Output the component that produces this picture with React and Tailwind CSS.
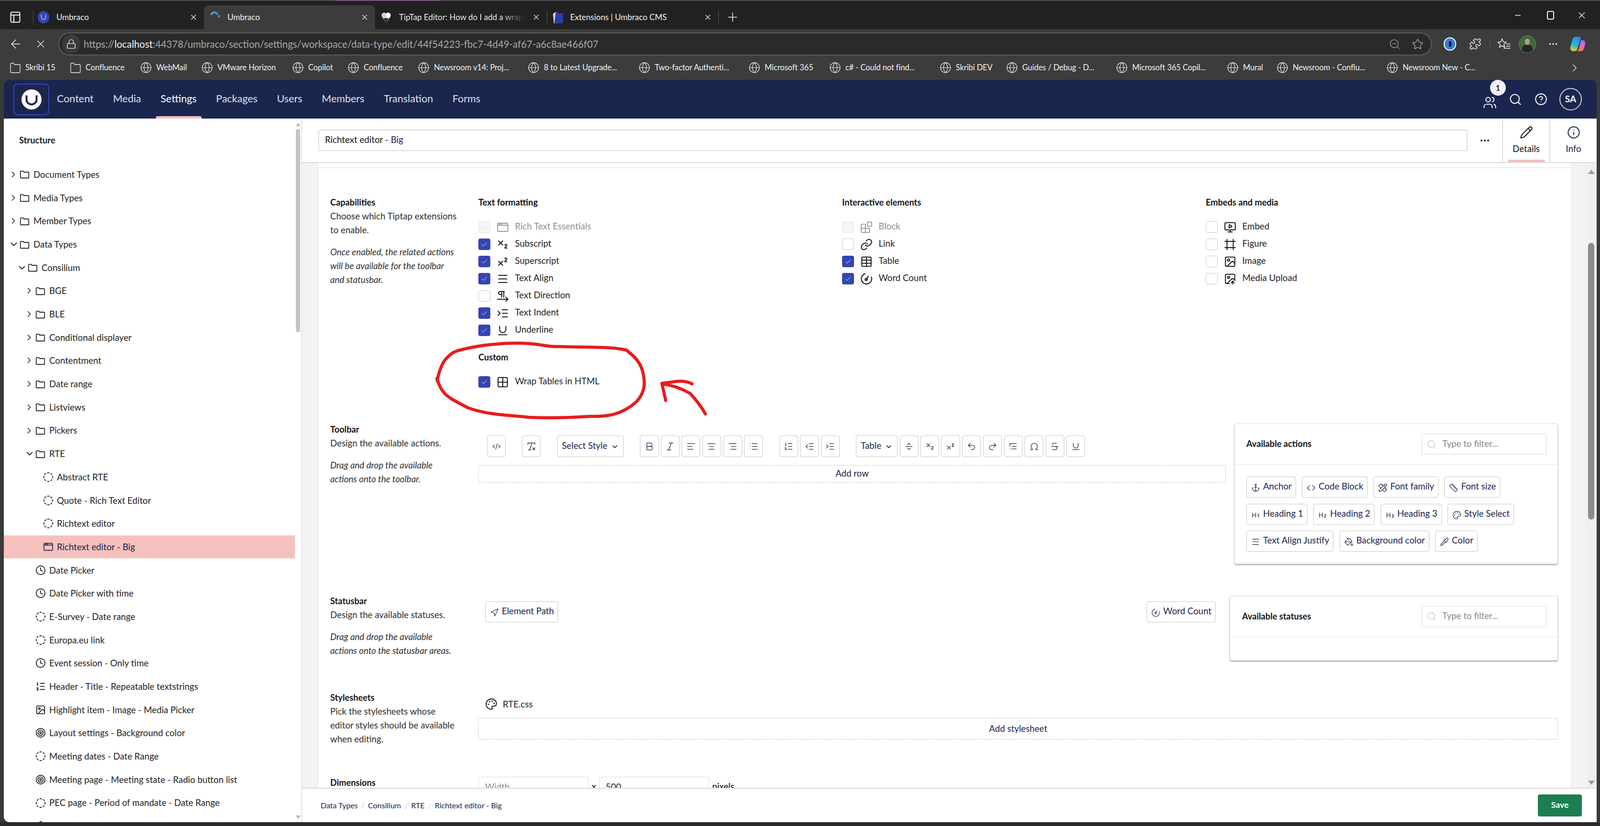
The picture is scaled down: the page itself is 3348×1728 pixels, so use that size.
import React from "react";
import {
  Anchor, AlignCenter, AlignLeft, AlignRight, AppWindow, ArrowLeft, Blocks, Bold, Check, ChevronDown, ChevronRight,
  CircleDashed, CircleHelp, Clock, Code, CodeXml, Ellipsis, Frame, Globe, Grid2x2, Heading1, Heading2, Heading3,
  Image, ImageUp, IndentDecrease, IndentIncrease, Italic, Link, List, ListOrdered, Lock, Minus, MonitorPlay, Navigation, Omega, PaintBucket,
  Palette, Pencil, PencilRuler, PilcrowRight, Pipette, Plus, Puzzle, Redo2, RemoveFormatting, Ruler, Search, Star, Strikethrough,
  Subscript, Superscript, Table, Target, Underline, Undo2, Users, X, ZoomOut, Info, Menu,
} from "lucide-react";

function FolderIcon({ color = "#111" }) {
  return (
    <svg width="21" height="21" viewBox="0 0 24 24" fill="none" stroke={color} strokeWidth="1.8" strokeLinejoin="round">
      <path d="M2 5.5V20a1 1 0 0 0 1 1h18a1 1 0 0 0 1-1V8a1 1 0 0 0-1-1H10L8.5 4.5H3a1 1 0 0 0-1 1z" />
    </svg>
  );
}

function GaugeIcon({ size = 26, strokeWidth = 2, className }) {
  return (
    <svg className={className} width={size} height={size} viewBox="0 0 24 24" fill="none" stroke="currentColor" strokeWidth={strokeWidth} strokeLinecap="round">
      <path d="M9.5 2.6A10 10 0 1 0 21.6 9" />
      <path d="M12 13l3.5-6" />
      <circle cx="11.5" cy="13.5" r="2" />
    </svg>
  );
}

function HrIcon({ size = 20, strokeWidth = 1.5 }) {
  return (
    <svg width={size} height={size} viewBox="0 0 24 24" fill="none" stroke="currentColor" strokeWidth={strokeWidth} strokeLinecap="round" strokeLinejoin="round">
      <path d="M4 12h16M8.5 7.5L12 4l3.5 3.5M8.5 16.5L12 20l3.5-3.5" />
    </svg>
  );
}

function DirIcon({ size = 20, strokeWidth = 1.5 }) {
  return (
    <svg width={size} height={size} viewBox="0 0 24 24" fill="none" stroke="currentColor" strokeWidth={strokeWidth} strokeLinecap="round">
      <path d="M4 5h16M4 5v6M9 12h11M9 18h11M4 18h1" />
    </svg>
  );
}

function FavIcon() {
  return (
    <svg width="29" height="28" viewBox="0 0 29 28" fill="none" stroke="#f0f0f0" strokeWidth="1.5" strokeLinejoin="round" strokeLinecap="round">
      <path d="M10 3l2.6 6.4 6.4.6-5 4.4 1.6 6.8L10 17.5l-5.6 3.7L6 14.4 1 10l6.4-.6z" />
      <path d="M19 14h8M19 18.5h8M14 23h13" />
    </svg>
  );
}

function FilledFolder() {
  return (
    <svg width="24" height="26" viewBox="0 0 24 24" fill="none" stroke="#f2f2f2" strokeWidth="1.3" strokeLinejoin="round">
      <path d="M2 4v16.5a1.5 1.5 0 0 0 1.5 1.5h17a1.5 1.5 0 0 0 1.5-1.5V6.5A1.5 1.5 0 0 0 20.5 5H10L8 2H4a2 2 0 0 0-2 2z" />
    </svg>
  );
}

const bookmarks = [
  ["Skribi 15", 20, 146, "f"], ["Confluence", 146, 293, "f"], ["WebMail", 293, 421], ["VMware Horizon", 421, 611], ["Copilot", 611, 727],
  ["Confluence", 727, 874], ["Newsroom v14: Proj...", 874, 1104], ["8 to Latest Upgrade...", 1104, 1336], ["Two-factor Authenti...", 1336, 1566],
  ["Microsoft 365", 1566, 1735], ["c# - Could not find...", 1735, 1966], ["Skribi DEV", 1966, 2105], ["Guides / Debug - D...", 2105, 2335],
  ["Microsoft 365 Copil...", 2335, 2567], ["Mural", 2567, 2671], ["Newsroom - Conflu...", 2671, 2901], ["Newsroom New - C...", 2901, 3120],
];

function Tab({ active, icon, label, w = 358, pl = 13, gap = 16, textW = 260, fade }) {
  return (
    <div
      className={`flex h-[50px] shrink-0 items-center ${active ? "rounded-t-[10px] bg-[#3c3c3c]" : ""}`}
      style={{ width: w, paddingLeft: pl }}
    >
      {icon}
      <span
        className={`overflow-hidden whitespace-nowrap text-[17px] text-[#f2f2f2] ${fade ? "[mask-image:linear-gradient(90deg,#000_82%,transparent)]" : ""}`}
        style={{ marginLeft: gap, width: textW }}
      >
        {label}
      </span>
      <X className="ml-auto mr-[13px] shrink-0 text-[#eeeeee]" size={18} strokeWidth={1.6} />
    </div>
  );
}

function ChromeBar() {
  return (
    <div className="shrink-0 [font-family:'Noto_Sans',sans-serif]">
      <div className="flex h-[2px] bg-[#4a4a4a]">
        <div className="ml-[701px] w-[221px] bg-[#7d5480]" />
      </div>
      <div className="flex h-[59px] items-end bg-[#212121]">
        <div className="flex h-[50px] w-[69px] shrink-0 items-center pl-[21px]">
          <svg width="22" height="24" viewBox="0 0 22 24" fill="none" stroke="#f2f2f2" strokeWidth="2">
            <rect x="1.5" y="1.5" width="19" height="21" rx="3" />
            <path d="M1.5 7.5h19M8 7.5v15" />
          </svg>
        </div>
        <div className="mb-[9px] h-[30px] w-px shrink-0 bg-[#555]" />
        <Tab
          w={357}
          pl={9}
          gap={15}
          textW={200}
          label="Umbraco"
          icon={
            <svg width="24" height="30" viewBox="0 0 24 30">
              <ellipse cx="12" cy="15" rx="12" ry="13" fill="#3544b1" />
              <path d="M7.5 9v6a4.5 4.5 0 0 0 9 0V9" fill="none" stroke="#9aa5e8" strokeWidth="2" />
            </svg>
          }
        />
        <Tab
          active
          w={358}
          label="Umbraco"
          textW={200}
          icon={
            <svg width="20" height="24" viewBox="0 0 20 24" fill="none" stroke="#4fa3e0" strokeWidth="3.5" strokeLinecap="round">
              <path d="M2 6a7 7 0 0 1 12-1M18 9l.3 2" />
            </svg>
          }
        />
        <Tab
          w={359}
          gap={17}
          fade
          textW={262}
          label="TipTap Editor: How do I add a wrapper around tables?"
          icon={
            <svg width="20" height="26" viewBox="0 0 20 26">
              <path d="M10 25L2 13a5 5 0 0 1 8-8z" fill="#f7c3bc" />
              <path d="M10 25l8-12a5 5 0 0 0-8-8z" fill="#fff" />
              <path d="M10 25L4.5 15h11z" fill="#1b264f" />
            </svg>
          }
        />
        <div className="mb-[9px] h-[30px] w-px shrink-0 bg-[#555]" />
        <Tab
          w={358}
          pl={10}
          gap={13}
          textW={220}
          label="Extensions | Umbraco CMS"
          icon={
            <svg width="25" height="30" viewBox="0 0 25 30">
              <path d="M2 8l7-5 3 5v20H4z" fill="#f4c9c0" />
              <path d="M8 2l7 5 8-1v22H5z" fill="#283fa8" />
            </svg>
          }
        />
        <div className="mb-[9px] h-[30px] w-px shrink-0 bg-[#555]" />
        <div className="flex h-[50px] items-center pl-[14px]">
          <Plus className="text-[#f0f0f0]" size={30} strokeWidth={1.2} />
        </div>
        <div className="ml-auto flex h-[59px] items-start pt-[15px]">
          <div className="flex h-[30px] w-[68px] items-center justify-center">
            <Minus className="text-[#f2f2f2]" size={18} strokeWidth={2} />
          </div>
          <div className="flex h-[30px] w-[68px] items-center justify-center">
            <div className="h-[18px] w-[15px] rounded-[3px] border-2 border-[#f2f2f2]" />
          </div>
          <div className="flex h-[30px] w-[68px] items-center justify-center pr-[4px]">
            <X className="text-[#f2f2f2]" size={22} strokeWidth={1.5} />
          </div>
          <div className="w-[2px]" />
        </div>
      </div>
      <div className="flex h-[56px] items-start bg-[#3c3c3c] pt-[7px]">
        <div className="flex h-[48px] w-[122px] shrink-0 items-center pl-[18px]">
          <ArrowLeft className="text-[#f0f0f0]" size={30} strokeWidth={1.2} />
          <X className="ml-[24px] text-[#f0f0f0]" size={26} strokeWidth={1.2} />
        </div>
        <div className="flex h-[48px] w-[2874px] shrink-0 items-center rounded-full border-2 border-[#5c5c5c] bg-[#2a2a2a] pl-[6px]">
          <div className="flex h-[40px] w-[38px] shrink-0 items-center justify-center rounded-full bg-[#3a3a3a]">
            <Lock className="text-[#f0f0f0]" size={22} strokeWidth={1.5} />
          </div>
          <div className="ml-[7px] text-[20.4px] text-[#a8a8a8]">
            https://<span className="text-[#f4f4f4]">localhost</span>:44378/umbraco/section/settings/workspace/data-type/edit/44f54223-fbc7-4d49-af67-a6c8ae466f07
          </div>
          <ZoomOut className="ml-auto text-[#a0a0a0]" size={25} strokeWidth={1.3} />
          <Star className="ml-[23px] mr-[15px] text-[#b0b0b0]" size={25} strokeWidth={1.3} />
        </div>
        <div className="flex h-[48px] flex-1 items-center">
          <div className="ml-[25px] flex h-[28px] w-[26px] items-center justify-center rounded-full border-2 border-white bg-[#2f7fd6]">
            <div className="h-[12px] w-[5px] rounded-full bg-[#111]" />
          </div>
          <Puzzle className="ml-[27px] text-[#f0f0f0]" size={26} strokeWidth={1.4} />
          <div className="ml-[17px] h-[30px] w-px bg-[#5a5a5a]" />
          <div className="ml-[15px]">
            <FavIcon />
          </div>
          <div className="ml-[16px] flex h-[37px] w-[36px] flex-col items-center overflow-hidden rounded-full border border-[#777] bg-[#3f6b3a] pt-[6px]">
            <div className="h-[13px] w-[10px] shrink-0 rounded-full bg-[#b89a86]" />
            <div className="h-[18px] w-[22px] shrink-0 rounded-t-[8px] bg-[#23262f]" />
          </div>
          <Ellipsis className="ml-[25px] text-[#f0f0f0]" size={22} strokeWidth={2} />
          <svg className="ml-[23px]" width="34" height="32" viewBox="0 0 34 32">
            <defs>
              <linearGradient id="cpa" x1="0.5" y1="0" x2="0.3" y2="1">
                <stop offset="0" stopColor="#1e8ff0" />
                <stop offset="0.6" stopColor="#2fb9c9" />
                <stop offset="1" stopColor="#e3d12e" />
              </linearGradient>
              <linearGradient id="cpb" x1="0.5" y1="0" x2="0.5" y2="1">
                <stop offset="0" stopColor="#9a6cf2" />
                <stop offset="0.55" stopColor="#e765c4" />
                <stop offset="1" stopColor="#ff8138" />
              </linearGradient>
            </defs>
            <path d="M24 8h3c5 0 7 4 6 9l-3 9c-1 3-3 5-7 5h-10c4 0 6-2 7-5z" fill="url(#cpb)" />
            <path d="M13 1h8c3 0 3 3 2 5l-6 20c-1 3-3 5-7 5H8c-5 0-7-5-6-9l4-14c1-4 3-7 7-7z" fill="url(#cpa)" />
          </svg>
        </div>
      </div>
      <div className="relative flex h-[50px] items-center bg-[#3c3c3c] pl-[20px] pb-[1px]">
        {bookmarks.map(([t, a, b, kind]) => (
          <div key={t + a} className="flex shrink-0 items-center gap-[9px]" style={{ width: b - a }}>
            {kind === "f" ? <FilledFolder /> : <Globe className="shrink-0 text-[#f2f2f2]" size={25} strokeWidth={1.1} />}
            <span className="whitespace-nowrap text-[16.5px] tracking-[-0.1px] text-[#f2f2f2]">{t}</span>
          </div>
        ))}
        <ChevronRight className="absolute right-[40px] top-[12px] text-[#f0f0f0]" size={26} strokeWidth={1.2} />
      </div>
    </div>
  );
}

const navItems = ["Content", "Media", "Settings", "Packages", "Users", "Members", "Translation", "Forms"];

function AppHeader() {
  return (
    <div className="flex h-[81px] shrink-0 items-center rounded-t-[12px] bg-[#1b264f] pl-[20px] pr-[31px]">
      <div className="flex h-[66px] w-[75px] shrink-0 items-center justify-center rounded-[8px] border-2 border-[#3544b1]">
        <svg width="42" height="42" viewBox="0 0 42 42">
          <circle cx="21" cy="21" r="21" fill="#fff" />
          <path d="M10.5 12.5v9a10.5 10 0 0 0 21 0v-9" fill="none" stroke="#1b264f" strokeWidth="4" />
        </svg>
      </div>
      <nav className="ml-[16px] flex h-full items-stretch gap-[40.7px]">
        {navItems.map((n) => (
          <div key={n} className={`relative flex items-center pb-[2px] text-[21.5px] ${n === "Settings" ? "text-white" : "text-[#dfe1e8]"}`}>
            {n}
            {n === "Settings" && <div className="absolute bottom-0 left-[-10px] right-[-11px] h-[5px] rounded-t-[4px] bg-[#f5c1bc]" />}
          </div>
        ))}
      </nav>
      <div className="relative ml-auto flex items-center">
        <Users className="mt-[13px] text-white" size={29} strokeWidth={1.6} />
        <div className="absolute left-[15px] top-[-17px] flex h-[33px] w-[33px] items-center justify-center rounded-full bg-[#f3f3f5] text-[17px] font-bold text-[#1b264f]">1</div>
        <Search className="ml-[25px] text-white" size={28} strokeWidth={1.7} />
        <CircleHelp className="ml-[26px] text-white" size={27} strokeWidth={1.7} />
        <div className="ml-[25px] flex h-[47px] w-[47px] items-center justify-center rounded-full border-2 border-[#d0d0d0] text-[19px] font-bold text-white">SA</div>
      </div>
    </div>
  );
}

const Dash = <CircleDashed size={22} strokeWidth={1.8} className="text-[#111]" />;
const Clk = <Clock size={22} strokeWidth={1.8} className="text-[#111]" />;
const Tgt = <Target size={22} strokeWidth={1.8} className="text-[#111]" />;

const tree = [
  ["Document Types", 0, "r"], ["Media Types", 0, "r"], ["Member Types", 0, "r"], ["Data Types", 0, "d"], ["Consilium", 1, "d"],
  ["BGE", 2, "r"], ["BLE", 2, "r"], ["Conditional displayer", 2, "r"], ["Contentment", 2, "r"], ["Date range", 2, "r"], ["Listviews", 2, "r"],
  ["Pickers", 2, "r"], ["RTE", 2, "d"],
  ["Abstract RTE", 3, null, Dash], ["Quote - Rich Text Editor", 3, null, Dash], ["Richtext editor", 3, null, Dash],
  ["Richtext editor - Big", 3, null, <AppWindow size={22} strokeWidth={1.8} className="text-[#1b264f]" />, true],
  ["Date Picker", 2, null, Clk], ["Date Picker with time", 2, null, Clk], ["E-Survey - Date range", 2, null, Dash], ["Europa.eu link", 2, null, Dash],
  ["Event session - Only time", 2, null, Clk],
  ["Header - Title - Repeatable textstrings", 2, null, <ListOrdered size={22} strokeWidth={1.8} className="text-[#111]" />],
  ["Highlight item - Image - Media Picker", 2, null, <Image size={22} strokeWidth={1.8} className="text-[#111]" />],
  ["Layout settings - Background color", 2, null, Tgt], ["Meeting dates - Date Range", 2, null, Dash],
  ["Meeting page - Meeting state - Radio button list", 2, null, Tgt], ["PEC page - Period of mandate - Date Range", 2, null, Dash],
  ["PEC page - Period of mandate - Date Range", 2, null, Dash],
];

const treeOffset = { 0: 33, 1: 50, 2: 66, 3: 82 };

function Sidebar() {
  return (
    <aside className="flex w-[624px] shrink-0 overflow-hidden rounded-bl-[12px] border-r-2 border-[#e4e4e6] bg-white">
      <div className="w-[609px] shrink-0 overflow-hidden">
        <div className="h-[92.6px] pl-[32px] pt-[29px] text-[18.2px] font-bold leading-[32px] text-[#1b1b1b]">Structure</div>
        {tree.map(([label, lvl, chev, icon, sel], i) => (
          <div
            key={label + i}
            className={`flex h-[48.7px] items-center ${sel ? "bg-[#f5c1bc] text-[#1b264f]" : "text-[#1f1f1f]"}`}
            style={{ paddingLeft: treeOffset[lvl] }}
          >
            <div className="flex w-[28px] shrink-0 items-center">
              {chev === "r" && <ChevronRight className="ml-[-23px] text-[#1b264f]" size={20} strokeWidth={2} />}
              {chev === "d" && <ChevronDown className="ml-[-23px] text-[#1b264f]" size={22} strokeWidth={2} />}
            </div>
            <div className="ml-[-28px] flex w-[29px] shrink-0 items-center">{icon || <FolderIcon />}</div>
            <span className="whitespace-nowrap">{label}</span>
          </div>
        ))}
      </div>
      <div className="flex w-[13px] shrink-0 flex-col items-center pt-[9px] pb-[7px]">
        <div className="h-0 w-0 border-x-[5px] border-b-[7px] border-x-transparent border-b-[#b8b8b8]" />
        <div className="mt-[6px] h-[425px] w-[9px] rounded-full bg-[#c4c4c4]" />
        <div className="mt-auto h-0 w-0 border-x-[5px] border-t-[7px] border-x-transparent border-t-[#b8b8b8]" />
      </div>
    </aside>
  );
}

function Box({ checked, disabled }) {
  let cls = "border border-[#c8c8c8] bg-white";
  if (checked) cls = "bg-[#3544b1]";
  if (disabled) cls = "border border-[#e2e2e2] bg-[#f6f6f6]";
  return (
    <div className={`flex h-[24.5px] w-[24.5px] shrink-0 items-center justify-center rounded-[4px] ${cls}`}>
      {(checked || disabled === "checked") && (
        <Check size={15} strokeWidth={1.5} className={disabled ? "text-[#d8d8d8]" : "text-white"} />
      )}
    </div>
  );
}

function CheckRow({ icon: I, custom, label, checked, disabled }) {
  return (
    <div className={`flex h-[36px] items-center ${disabled ? "text-[#8f8f8f]" : "text-[#1f1f1f]"}`}>
      <Box checked={checked} disabled={disabled} />
      <div className="ml-[13px] flex w-[26px] shrink-0 items-center justify-center">
        {custom || <I size={27} strokeWidth={disabled ? 1.6 : 1.9} />}
      </div>
      <span className="ml-[13px] mb-[4px] whitespace-nowrap">{label}</span>
    </div>
  );
}

function TB({ icon: I, size = 20, sw = 1.5 }) {
  return (
    <div className="flex h-[45px] w-[39px] shrink-0 items-center justify-center rounded-[4px] border-[1.5px] border-[#c8c8c8] text-[#1b264f]">
      <I size={size} strokeWidth={sw} />
    </div>
  );
}

function TBSelect({ label, w }) {
  return (
    <div className="flex h-[45px] shrink-0 items-center justify-between rounded-[4px] border-[1.5px] border-[#c8c8c8] px-[9px] pb-[3px] text-[#1b264f]" style={{ width: w }}>
      <span className="whitespace-nowrap">{label}</span>
      <ChevronDown className="mt-[4px]" size={17} strokeWidth={2} />
    </div>
  );
}

function Chip({ icon: I, label }) {
  return (
    <div className="flex h-[44px] shrink-0 items-center gap-[6px] rounded-[4px] border-[1.5px] border-[#c8c8c8] pl-[9px] pr-[8px] text-[#1b264f]">
      <I className="mt-[3px] shrink-0" size={19} strokeWidth={1.5} />
      <span className="mb-[3px] whitespace-nowrap">{label}</span>
    </div>
  );
}

function Filter() {
  return (
    <div className="flex h-[44px] w-[261px] shrink-0 items-center rounded-[4px] border-[1.5px] border-[#dcdcdc] pl-[9px] text-[#8a8a8a]">
      <Search className="text-[#c4c4c4]" size={21} strokeWidth={1.4} />
      <span className="ml-[12px] mb-[2px]">Type to filter...</span>
    </div>
  );
}

function Label({ title, lines, note }) {
  return (
    <div className="w-[310px] shrink-0 whitespace-nowrap leading-[29px] text-[#303030]">
      <div className="text-[18.2px] font-bold text-[#151515]">{title}</div>
      <div>
        {lines.map((l) => (
          <div key={l}>{l}</div>
        ))}
      </div>
      {note && (
        <div className="mt-[17px] italic">
          {note.map((l) => (
            <div key={l}>{l}</div>
          ))}
        </div>
      )}
    </div>
  );
}

function ColHead({ children }) {
  return <div className="mb-[19px] h-[29px] text-[18.2px] font-bold leading-[29px] text-[#151515]">{children}</div>;
}

function Content() {
  return (
    <div className="flex-1 overflow-hidden border-l border-[#e4e4e6] bg-white pl-[25px] pr-[26px]">
      <div className="-ml-[25px] -mr-[26px] h-[11px] border-b-2 border-[#ececee]" />
      <div className="mt-[57px] flex h-[475px]">
        <Label
          title="Capabilities"
          lines={["Choose which Tiptap extensions", "to enable."]}
          note={["Once enabled, the related actions", "will be available for the toolbar", "and statusbar."]}
        />
        <div className="grid flex-1 grid-cols-[761px_761px_1fr]">
          <div>
            <ColHead>Text formatting</ColHead>
            <CheckRow icon={AppWindow} label="Rich Text Essentials" disabled="checked" />
            <CheckRow icon={Subscript} label="Subscript" checked />
            <CheckRow icon={Superscript} label="Superscript" checked />
            <CheckRow icon={Menu} label="Text Align" checked />
            <CheckRow icon={PilcrowRight} label="Text Direction" />
            <CheckRow icon={IndentIncrease} label="Text Indent" checked />
            <CheckRow icon={Underline} label="Underline" checked />
            <div className="mt-[24px]">
              <ColHead>Custom</ColHead>
              <CheckRow icon={Grid2x2} label="Wrap Tables in HTML" checked />
            </div>
          </div>
          <div>
            <ColHead>Interactive elements</ColHead>
            <CheckRow icon={Blocks} label="Block" disabled="empty" />
            <CheckRow icon={Link} label="Link" />
            <CheckRow icon={Table} label="Table" checked />
            <CheckRow custom={<GaugeIcon />} label="Word Count" checked />
          </div>
          <div>
            <ColHead>Embeds and media</ColHead>
            <CheckRow icon={MonitorPlay} label="Embed" />
            <CheckRow icon={Frame} label="Figure" />
            <CheckRow icon={Image} label="Image" />
            <CheckRow icon={ImageUp} label="Media Upload" />
          </div>
        </div>
      </div>

      <div className="flex h-[359px]">
        <Label
          title="Toolbar"
          lines={["Design the available actions."]}
          note={["Drag and drop the available", "actions onto the toolbar."]}
        />
        <div className="flex flex-1 items-start">
          <div className="w-[1564px] shrink-0 pt-[27px]">
            <div className="flex gap-[34.4px] pl-[18px]">
              <TB icon={CodeXml} size={18} />
              <TB icon={RemoveFormatting} size={22} />
              <TBSelect label="Select Style" w={139} />
              <div className="flex gap-[4.6px]">
                <TB icon={Bold} size={22} sw={1.4} />
                <TB icon={Italic} size={22} sw={1.4} />
                <TB icon={AlignLeft} />
                <TB icon={AlignCenter} />
                <TB icon={AlignRight} />
                <TB icon={List} />
              </div>
              <div className="flex gap-[4.6px]">
                <TB icon={ListOrdered} />
                <TB icon={IndentDecrease} />
                <TB icon={IndentIncrease} />
              </div>
              <div className="flex gap-[4.6px]">
                <TBSelect label="Table" w={87} />
                <TB icon={HrIcon} />
                <TB icon={Subscript} />
                <TB icon={Superscript} />
                <TB icon={Undo2} />
                <TB icon={Redo2} />
                <TB icon={DirIcon} />
                <TB icon={Omega} />
                <TB icon={Strikethrough} />
                <TB icon={Underline} />
              </div>
            </div>
            <div className="mt-[17px] flex h-[37px] items-center justify-center rounded-[3px] border border-dashed border-[#c0c0c0] text-[#1b264f]">
              <span className="mb-[2px]">Add row</span>
            </div>
          </div>
          <div className="ml-[18px] mt-[2px] h-[294px] flex-1 rounded-[4px] border border-[#dcdcdc] bg-white shadow-[0_2px_3px_rgba(0,0,0,0.35)]">
            <div className="flex h-[85px] items-center justify-between border-b border-[#e4e4e6] pl-[24px] pr-[23px]">
              <span className="text-[18.2px] font-bold text-[#151515]">Available actions</span>
              <Filter />
            </div>
            <div className="flex flex-col gap-[12.5px] px-[24px] pt-[25px]">
              <div className="flex gap-[12.5px]">
                <Chip icon={Anchor} label="Anchor" />
                <Chip icon={Code} label="Code Block" />
                <Chip icon={PencilRuler} label="Font family" />
                <Chip icon={Ruler} label="Font size" />
              </div>
              <div className="flex gap-[12.5px]">
                <Chip icon={Heading1} label="Heading 1" />
                <Chip icon={Heading2} label="Heading 2" />
                <Chip icon={Heading3} label="Heading 3" />
                <Chip icon={Palette} label="Style Select" />
              </div>
              <div className="flex gap-[12.5px]">
                <Chip icon={Menu} label="Text Align Justify" />
                <Chip icon={PaintBucket} label="Background color" />
                <Chip icon={Pipette} label="Color" />
              </div>
            </div>
          </div>
        </div>
      </div>

      <div className="flex h-[202px]">
        <Label
          title="Statusbar"
          lines={["Design the available statuses."]}
          note={["Drag and drop the available", "actions onto the statusbar areas."]}
        />
        <div className="flex flex-1 items-start">
          <div className="flex w-[1543px] shrink-0 justify-between pl-[14px] pt-[15px]">
            <Chip icon={Navigation} label="Element Path" />
            <Chip icon={GaugeIcon} label="Word Count" />
          </div>
          <div className="ml-[29px] mt-[3px] h-[136px] flex-1 rounded-[4px] border border-[#dcdcdc] bg-white shadow-[0_2px_3px_rgba(0,0,0,0.35)]">
            <div className="flex h-[86px] items-center justify-between border-b border-[#e4e4e6] pl-[25px] pr-[23px]">
              <span className="text-[18.2px] font-bold text-[#151515]">Available statuses</span>
              <Filter />
            </div>
          </div>
        </div>
      </div>

      <div className="flex h-[178px]">
        <Label
          title="Stylesheets"
          lines={["Pick the stylesheets whose", "editor styles should be available", "when editing."]}
        />
        <div className="flex-1 pt-[6px]">
          <div className="flex h-[44px] items-center pl-[14px] text-[#1f1f1f]">
            <Palette size={26} strokeWidth={1.8} />
            <span className="ml-[11px]">RTE.css</span>
          </div>
          <div className="mt-[7px] flex h-[45px] items-center justify-center rounded-[3px] border border-dashed border-[#c0c0c0] text-[#1b264f]">
            <span>Add stylesheet</span>
          </div>
        </div>
      </div>

      <div className="flex h-[60px]">
        <Label title="Dimensions" lines={[]} />
        <div className="flex flex-1 items-start pt-[2px]">
          <div className="h-[44px] w-[231px] rounded-[4px] border-[1.5px] border-[#dcdcdc] pl-[13px] pt-[6px] text-[#8a8a8a]">Width</div>
          <span className="mx-[6px] mt-[6px]">x</span>
          <div className="h-[44px] w-[231px] rounded-[4px] border-[1.5px] border-[#dcdcdc] pl-[13px] pt-[6px] text-[#1f1f1f]">500</div>
          <span className="ml-[6px] mt-[6px]">pixels</span>
        </div>
      </div>
    </div>
  );
}

function Workspace() {
  return (
    <main className="flex min-w-0 flex-1 flex-col">
      <div className="flex h-[93px] shrink-0 items-stretch border-b-2 border-[#dcdcde] bg-white">
        <div className="flex flex-1 items-center pl-[34px]">
          <div className="flex h-[45px] w-[2405px] items-center gap-[5px] rounded-[4px] border-2 border-[#dedede] pl-[12px] pb-[2px] text-[#151515]">
            <span>Richtext editor -</span>
            <span className="text-[#1b264f]">Big</span>
          </div>
        </div>
        <div className="flex w-[72px] items-center justify-center">
          <Ellipsis className="text-[#1b264f]" size={24} strokeWidth={2.2} />
        </div>
        <div className="relative flex w-[99px] flex-col items-center border-l-2 border-[#dcdcde] pt-[15px] text-[#111]">
          <Pencil size={28} strokeWidth={1.7} />
          <span className="mt-[6px] leading-[28px]">Details</span>
          <div className="absolute bottom-0 left-[10px] right-[9px] h-[5px] rounded-t-[4px] bg-[#f5c1bc]" />
        </div>
        <div className="flex w-[99px] flex-col items-center border-l-2 border-[#dcdcde] pt-[15px] text-[#1b264f]">
          <Info size={28} strokeWidth={1.7} />
          <span className="mt-[6px] leading-[28px]">Info</span>
        </div>
      </div>
      <div className="flex min-h-0 flex-1 bg-[#f3f3f5]">
        <div className="flex min-w-0 flex-1 pl-[33px] pr-[32px]">
          <Content />
        </div>
        <div className="flex w-[23px] shrink-0 flex-col items-center bg-[#f0f0f0] pt-[14px] pb-[6px]">
          <div className="h-0 w-0 border-x-[7px] border-b-[9px] border-x-transparent border-b-[#9a9a9a]" />
          <div className="mt-[144px] h-[579px] w-[13px] rounded-full bg-[#8c8c8c]" />
          <div className="mt-auto h-0 w-0 border-x-[7px] border-t-[9px] border-x-transparent border-t-[#9a9a9a]" />
        </div>
      </div>
      <div className="flex h-[72px] shrink-0 items-center justify-between border-t-2 border-[#dcdcde] bg-white pl-[39px] pr-[31px] text-[16px]">
        <div className="flex items-center text-[#1b264f]">
          <span>Data Types</span>
          <span className="mx-[7px] text-[#d0d0d0]">/</span>
          <span>Consilium</span>
          <span className="mx-[7px] text-[#d0d0d0]">/</span>
          <span>RTE</span>
          <span className="mx-[7px] text-[#d0d0d0]">/</span>
          <span>Richtext editor - Big</span>
        </div>
        <div className="flex h-[46px] w-[92px] items-center justify-center rounded-[4px] bg-[#1b7f52] pb-[1px] text-[17.5px] font-bold text-white">Save</div>
      </div>
    </main>
  );
}

function Annotation() {
  return (
    <svg className="pointer-events-none absolute left-0 top-0" width="3348" height="1728" fill="none" stroke="#e81c1c" strokeWidth="6.5" strokeLinecap="round" strokeLinejoin="round">
      <path d="M960 733C1000 722 1050 717 1094 718C1130 719 1145 726 1170 725C1220 727 1270 724 1310 732C1335 750 1346 767 1348 797C1349 815 1342 830 1330 842C1300 868 1270 872 1234 871C1190 874 1150 875 1106 873C1060 868 1020 868 979 853C950 838 935 830 928 820C915 805 913 780 915 797C918 775 928 755 934 750C945 738 950 736 960 733Z" />
      <path d="M1448 803C1438 798 1425 797 1415 798L1385 802L1393 838" />
      <path d="M1385 803C1410 806 1430 815 1444 823C1458 838 1470 855 1476 866" />
    </svg>
  );
}

export default function App() {
  return (
    <div className="relative flex h-[1728px] w-[3348px] flex-col overflow-hidden bg-[#3a3a3a] text-[18.7px] [font-family:Lato,sans-serif]">
      <ChromeBar />
      <div className="flex h-[1553px] shrink-0 flex-col pl-[8px] pr-[7px]">
        <AppHeader />
        <div className="flex min-h-0 flex-1">
          <Sidebar />
          <Workspace />
        </div>
      </div>
      <div className="flex-1 bg-[#2b2b2b]" />
      <Annotation />
    </div>
  );
}
